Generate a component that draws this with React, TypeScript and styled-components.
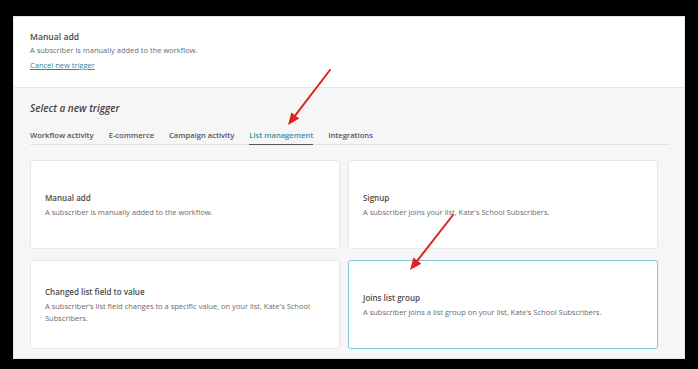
import React from "react";
import styled, { createGlobalStyle } from "styled-components";

const Global = createGlobalStyle`
  html, body { margin: 0; padding: 0; background: #000; }
  body { font-family: "Open Sans", "Noto Sans", sans-serif; }
  * { box-sizing: border-box; }
`;

const Screen = styled.div`
  position: relative;
  width: 698px;
  height: 369px;
  background: #000;
  padding: 16px 13px 10px 13px;
  overflow: hidden;
`;

const Panel = styled.div`
  width: 672px;
  height: 343px;
  background: #f6f6f6;
  border: 1px solid #e4e4e4;
  display: flex;
  flex-direction: column;
  overflow: hidden;
`;

const Current = styled.div`
  background: #fff;
  height: 71px;
  border-bottom: 1px solid #e6e6e6;
  padding: 14px 16px 0 16px;
  display: flex;
  flex-direction: column;
`;

const Title = styled.div<{ $size?: number }>`
  font-size: ${(p) => p.$size ?? 9}px;
  font-weight: 600;
  color: #4a4a4a;
  line-height: 13px;
`;

const Desc = styled.div`
  font-size: 7.5px;
  color: #6a6a6a;
  line-height: 12px;
`;

const CancelLink = styled.a`
  margin-top: 3px;
  font-size: 7.5px;
  line-height: 12px;
  color: #2a88a4;
  text-decoration: underline;
  cursor: pointer;
`;

const Chooser = styled.div`
  flex: 1;
  padding: 12px 14px 0 16px;
  display: flex;
  flex-direction: column;
`;

const Heading = styled.div`
  font-size: 10px;
  font-style: italic;
  font-weight: 600;
  color: #444;
  line-height: 16px;
`;

const Tabs = styled.div`
  margin-top: 12px;
  display: flex;
  gap: 15px;
  border-bottom: 1px solid #e2e2e2;
  height: 17px;
`;

const Tab = styled.div<{ $active?: boolean }>`
  font-size: 7.6px;
  font-weight: 600;
  line-height: 15px;
  color: ${(p) => (p.$active ? "#3a8fa8" : "#555")};
  border-bottom: 1px solid ${(p) => (p.$active ? "#555" : "transparent")};
  height: 17px;
`;

const Grid = styled.div`
  margin-top: 15px;
  width: 629px;
  display: grid;
  grid-template-columns: 310px 310px;
  grid-auto-rows: 89px;
  column-gap: 8px;
  row-gap: 11px;
`;

const Card = styled.div<{ $selected?: boolean }>`
  background: #fff;
  border: 1px solid ${(p) => (p.$selected ? "#86c7d6" : "#e8e8e8")};
  border-radius: 3px;
  padding: 0 15px 0 14px;
  display: flex;
  flex-direction: column;
  justify-content: center;
`;

const CardDesc = styled(Desc)`
  margin-top: 2px;
`;

const Overlay = styled.svg`
  position: absolute;
  left: 0;
  top: 0;
  width: 698px;
  height: 369px;
  pointer-events: none;
`;

const tabs = ["Workflow activity", "E-commerce", "Campaign activity", "List management", "Integrations"];

const cards = [
  { title: "Manual add", desc: "A subscriber is manually added to the workflow." },
  { title: "Signup", desc: "A subscriber joins your list, Kate's School Subscribers." },
  { title: "Changed list field to value", desc: "A subscriber's list field changes to a specific value, on your list, Kate's School Subscribers." },
  { title: "Joins list group", desc: "A subscriber joins a list group on your list, Kate's School Subscribers.", selected: true },
];

const Arrow = ({ x1, y1, x2, y2 }: { x1: number; y1: number; x2: number; y2: number }) => {
  const dx = x2 - x1;
  const dy = y2 - y1;
  const len = Math.hypot(dx, dy);
  const ux = dx / len;
  const uy = dy / len;
  const hl = 12;
  const hw = 5;
  const bx = x2 - ux * hl;
  const by = y2 - uy * hl;
  const px = -uy * hw;
  const py = ux * hw;
  return (
    <g>
      <line x1={x1} y1={y1} x2={bx} y2={by} stroke="#e0231d" strokeWidth={2} strokeLinecap="round" />
      <polygon points={`${x2},${y2} ${bx + px},${by + py} ${bx - px},${by - py}`} fill="#e0231d" />
    </g>
  );
};

export default function App() {
  return (
    <>
      <Global />
      <Screen>
        <Panel>
          <Current>
            <Title $size={8.6}>Manual add</Title>
            <Desc>A subscriber is manually added to the workflow.</Desc>
            <CancelLink>Cancel new trigger</CancelLink>
          </Current>
          <Chooser>
            <Heading>Select a new trigger</Heading>
            <Tabs>
              {tabs.map((t) => (
                <Tab key={t} $active={t === "List management"}>{t}</Tab>
              ))}
            </Tabs>
            <Grid>
              {cards.map((c) => (
                <Card key={c.title} $selected={c.selected}>
                  <Title $size={8}>{c.title}</Title>
                  <CardDesc>{c.desc}</CardDesc>
                </Card>
              ))}
            </Grid>
          </Chooser>
        </Panel>
        <Overlay viewBox="0 0 698 369">
          <Arrow x1={330} y1={70} x2={288} y2={125} />
          <Arrow x1={453} y1={215} x2={410} y2={270} />
        </Overlay>
      </Screen>
    </>
  );
}
